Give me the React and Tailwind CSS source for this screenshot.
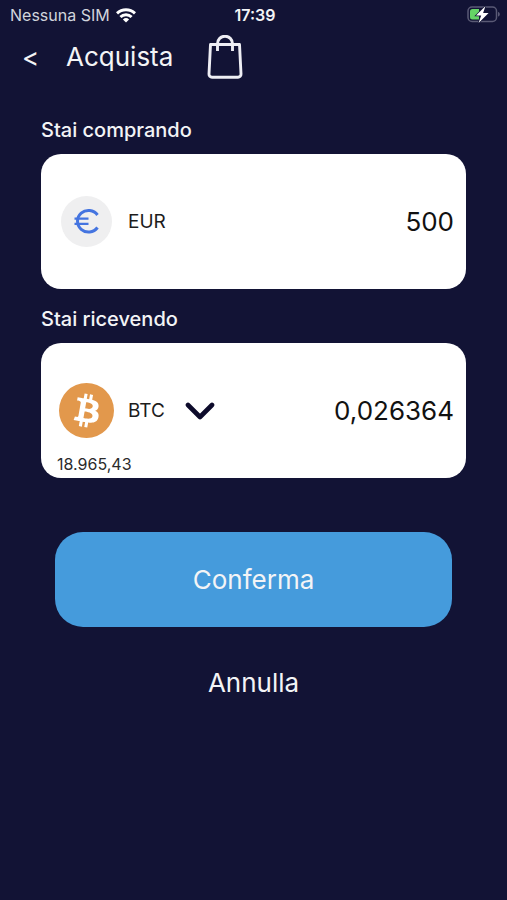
import React, { useState } from 'react';

function WifiIcon() {
  return (
    <svg viewBox="0 0 20 15" className="h-[15px] w-5" fill="none" stroke="#fff" strokeWidth="3" aria-hidden="true">
      <path d="M1 5.4a13 13 0 0 1 18 0" />
      <path d="M4.4 9a8.2 8.2 0 0 1 11.2 0" />
      <path d="M10 14.6 6.9 11.5a4.5 4.5 0 0 1 6.2 0z" fill="#fff" stroke="none" />
    </svg>
  );
}

function BatteryIcon() {
  return (
    <svg viewBox="0 0 33 18" className="h-[18px] w-[33px]" aria-hidden="true">
      <rect x="1" y="1" width="28.5" height="14.5" rx="4" fill="none" stroke="#5a5a75" strokeWidth="1.5" />
      <path d="M31 6v4.6c1.200-.300 1.800-1.200 1.800-2.300S32.200 6.300 31 6z" fill="#5a5a75" />
      <path d="M5.500 3H12v10.500H5.500A2.500 2.500 0 0 1 3 11V5.500A2.500 2.500 0 0 1 5.500 3z" fill="#65d466" />
      <path d="M18.500 0 9 9.500h5.200l-2.600 7.500 10-10h-5.500z" fill="#fff" stroke="#121335" strokeWidth="1.400" paintOrder="stroke" />
    </svg>
  );
}

function BagIcon() {
  return (
    <svg viewBox="0 0 36 45" className="h-[45px] w-9" fill="none" stroke="#eeeef4" strokeWidth="2.9" strokeLinejoin="round" aria-hidden="true">
      <path d="M3.500 9.500h29L34 39a3 3 0 0 1-3 3.200H5A3 3 0 0 1 2 39z" />
      <path d="M10.500 16V8.700a7.500 7.500 0 0 1 15 0V16" />
    </svg>
  );
}

function EuroIcon() {
  return (
    <svg viewBox="0 0 51 51" className="h-[51px] w-[51px]" fill="none" stroke="#4474e0" strokeWidth="3" aria-hidden="true">
      <circle cx="25.5" cy="25.5" r="25.5" fill="#efeff0" stroke="none" />
      <path d="M36.500 19a11 10.800 0 1 0 0 12.500" />
      <path d="M13.500 22.600h14M13.500 27.800h14" strokeWidth="2.300" />
    </svg>
  );
}

function BitcoinIcon() {
  return (
    <svg viewBox="0 0 32 32" className="h-[55px] w-[55px]" aria-hidden="true">
      <circle cx="16" cy="16" r="16" fill="#e2984c" />
      <path
        fill="#fff"
        fillRule="evenodd"
        transform="rotate(-4 16 16)"
        d="M23.189 14.020c.314-2.096-1.283-3.223-3.465-3.975l.708-2.840-1.728-.430-.690 2.765c-.454-.114-.920-.220-1.385-.326l.695-2.783L15.596 6l-.708 2.839c-.376-.086-.746-.170-1.104-.260l.002-.009-2.384-.595-.460 1.846s1.283.294 1.256.312c.700.175.826.638.805 1.006l-.806 3.235c.048.012.110.030.180.057l-.183-.045-1.130 4.532c-.086.212-.303.531-.793.410.018.025-1.256-.313-1.256-.313l-.858 1.978 2.250.561c.418.105.828.215 1.231.318l-.715 2.872 1.727.430.708-2.840c.472.127.930.245 1.378.357l-.706 2.828 1.728.430.715-2.866c2.948.558 5.164.333 6.097-2.333.752-2.146-.037-3.385-1.588-4.192 1.130-.260 1.980-1.003 2.207-2.538zm-3.950 5.538c-.533 2.147-4.148.986-5.320.695l.950-3.805c1.172.293 4.929.872 4.370 3.110zm.535-5.569c-.487 1.953-3.495.960-4.470.717l.860-3.450c.975.243 4.118.696 3.610 2.733z"
      />
    </svg>
  );
}

function ChevronIcon() {
  return (
    <svg
      viewBox="0 0 30 18"
      className="pointer-events-none absolute right-0 top-1/2 h-[18px] w-[30px] -translate-y-1/2"
      fill="none"
      stroke="#0d0b2b"
      strokeWidth="4.6"
      strokeLinecap="round"
      strokeLinejoin="round"
      aria-hidden="true"
    >
      <path d="m3 3 12 12L27 3" />
    </svg>
  );
}

const amountClass = 'min-w-0 flex-1 bg-transparent text-right text-[26px] leading-9 text-[#111111] outline-none';

export default function App() {
  const [amount, setAmount] = useState('500');
  const [coin, setCoin] = useState('BTC');

  return (
    <div className="min-h-screen bg-[#121335] font-['Inter','Liberation_Sans',sans-serif] text-gray-100">
      <div className="grid h-[30px] grid-cols-3 items-center pl-[10px] pr-[7px] text-base">
        <div className="flex items-center gap-1.5 whitespace-nowrap text-gray-300">
          <span>Nessuna SIM</span>
          <WifiIcon />
        </div>
        <span className="text-center font-semibold">17:39</span>
        <div className="flex justify-end">
          <BatteryIcon />
        </div>
      </div>

      <header className="flex h-[54px] items-center pl-[22px]">
        <button type="button" aria-label="Indietro" className="w-11 text-left text-[26px]">
          &lt;
        </button>
        <h1 className="text-[26px] leading-9">Acquista</h1>
        <span className="ml-[34px]">
          <BagIcon />
        </span>
      </header>

      <form className="px-[41px] pt-8" onSubmit={(e) => e.preventDefault()}>
        <label htmlFor="pay" className="block text-xl font-medium leading-7">
          Stai comprando
        </label>
        <div className="mt-[10px] flex h-[135px] items-center rounded-[20px] bg-white pl-5 pr-3">
          <EuroIcon />
          <span className="ml-4 text-[19px] leading-8 text-[#1c1c1c]">EUR</span>
          <input
            id="pay"
            type="text"
            inputMode="decimal"
            value={amount}
            onChange={(e) => setAmount(e.target.value)}
            className={amountClass}
          />
        </div>

        <label htmlFor="receive" className="mt-4 block text-xl font-medium leading-7">
          Stai ricevendo
        </label>
        <div className="mt-[10px] grid h-[135px] grid-cols-1 grid-rows-[1fr_auto_1fr] rounded-[20px] bg-white pl-[18px] pr-3">
          <div className="row-start-2 flex items-center">
            <BitcoinIcon />
            <div className="relative ml-[14px] w-[87px] shrink-0">
              <select
                aria-label="Valuta"
                value={coin}
                onChange={(e) => setCoin(e.target.value)}
                className="block w-full appearance-none bg-transparent text-[19px] leading-8 text-[#1c1c1c] outline-none"
              >
                <option>BTC</option>
                <option>ETH</option>
              </select>
              <ChevronIcon />
            </div>
            <input id="receive" type="text" readOnly value="0,026364" className={amountClass} />
          </div>
          <span className="row-start-3 -ml-0.5 self-end pb-0.5 text-base text-[#2b2b2b]">18.965,43</span>
        </div>

        <div className="mt-[54px] flex flex-col items-center gap-8 px-[14px]">
          <button type="submit" className="h-[95px] w-full rounded-[28px] bg-[#459bdc] text-[26px]">
            Conferma
          </button>
          <button type="button" className="px-6 text-[26px] leading-[48px]">
            Annulla
          </button>
        </div>
      </form>
    </div>
  );
}
